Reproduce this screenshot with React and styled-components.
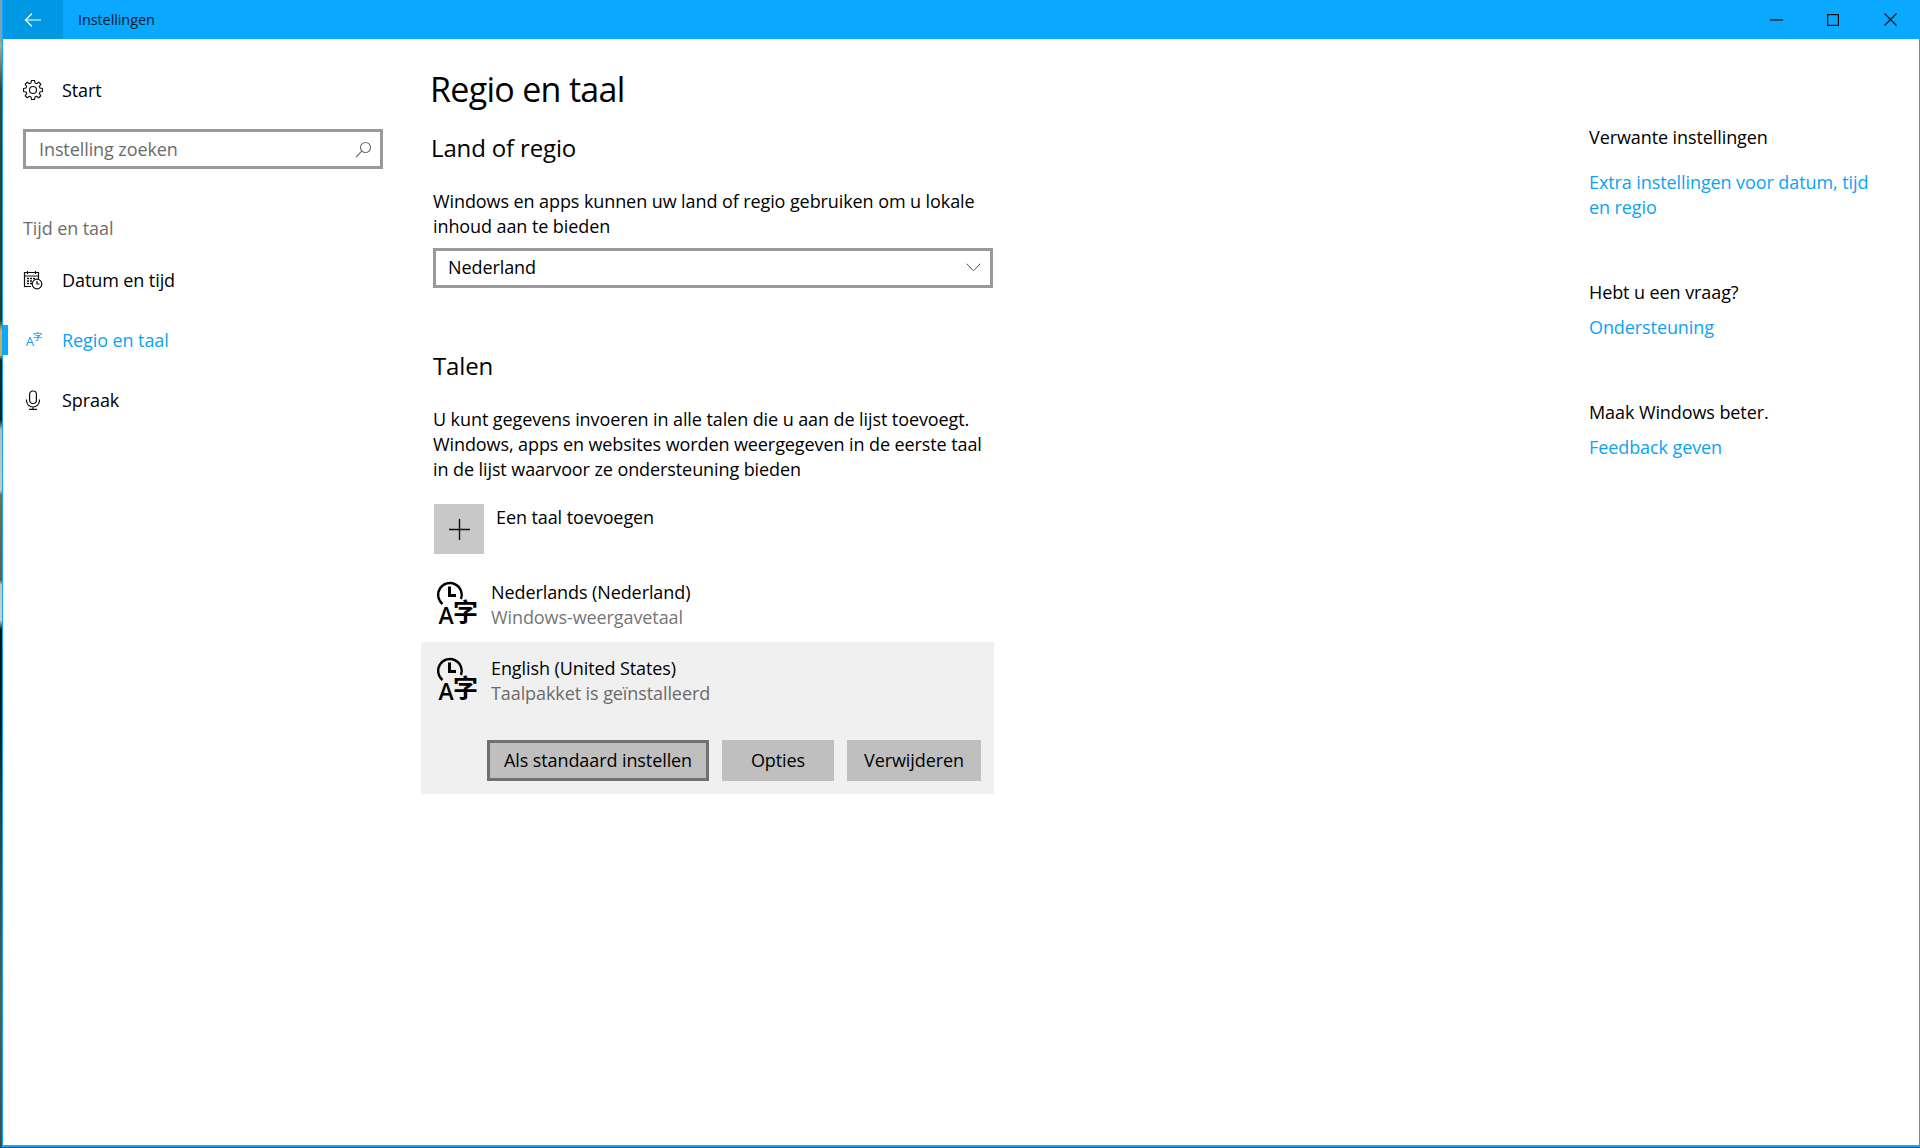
import React from 'react';
import styled, { createGlobalStyle } from 'styled-components';

const FONT = `"Open Sans", "Noto Sans", "Liberation Sans", sans-serif`;
const BLUE = '#0aa8ff';
const LINK = '#0aa3f5';

const Global = createGlobalStyle`
  html, body { margin: 0; padding: 0; height: 100%; }
  body {
    background: linear-gradient(180deg,
      #7ea0b0 0, #7ea0b0 40px, #b5a878 45px, #39413a 90px, #2a3a30 320px,
      #c9ad5c 330px, #c9ad5c 355px, #1f2a28 360px, #15202a 420px,
      #b9bcbc 430px, #c8c8c8 490px, #7d6a42 495px, #6b5c3e 580px,
      #c4c6c4 585px, #cfcfcf 620px, #08121c 630px, #0a1a28 720px,
      #2c3a40 800px, #555c58 1000px, #44494a 1148px);
    font-family: ${FONT};
    overflow: hidden;
  }
  #root { height: 100%; }
`;

const Window = styled.div`
  box-sizing: border-box;
  margin-left: 2px;
  width: 1918px;
  height: 1147px;
  border: 1px solid ${BLUE};
  border-top: 0;
  border-bottom-width: 2px;
  background: #fff;
  display: flex;
  flex-direction: column;
  color: #000;
  font-size: 18px;
  letter-spacing: -0.09px;
  line-height: 25px;
`;

const TitleBar = styled.header`
  flex: none;
  height: 39px;
  background: ${BLUE};
  display: flex;
  align-items: center;
`;
const BackButton = styled.button`
  width: 60px;
  height: 39px;
  border: 0;
  padding: 0;
  background: #0097e5;
  display: flex;
  align-items: center;
  justify-content: center;
`;
const AppName = styled.span`
  margin-left: 15px;
  font-size: 14.5px;
  letter-spacing: -0.1px;
  color: #04202f;
`;
const WindowControls = styled.div`
  margin-left: auto;
  display: flex;
`;
const ControlButton = styled.div`
  width: 57px;
  height: 39px;
  margin-left: ${p => p.$shift || 0}px;
  display: flex;
  align-items: center;
  justify-content: center;
`;

const Body = styled.div`
  flex: 1;
  display: flex;
  min-height: 0;
`;

const Sidebar = styled.nav`
  flex: none;
  width: 418px;
  padding-top: 26px;
  box-sizing: border-box;
`;
const NavRow = styled.div`
  height: 50px;
  display: flex;
  align-items: center;
  position: relative;
  padding-left: 20px;
  color: ${p => (p.$active ? LINK : '#000')};
  ${p => p.$active && `
    &::before {
      content: '';
      position: absolute;
      left: 0;
      top: 10px;
      width: 5px;
      height: 30px;
      background: ${BLUE};
    }
  `}
`;
const NavIcon = styled.span`
  width: 20px;
  height: 24px;
  margin-right: 19px;
  display: flex;
  align-items: center;
  justify-content: center;
`;
const NavItems = styled.div`
  display: flex;
  flex-direction: column;
  gap: 10px;
  margin-top: 14px;
`;
const SearchBox = styled.div`
  box-sizing: border-box;
  margin: 14px 0 0 20px;
  width: 360px;
  height: 40px;
  border: 3px solid #999;
  padding: 0 8px 0 13px;
  display: flex;
  align-items: center;
  justify-content: space-between;
  color: #6b6b6b;
`;
const SectionLabel = styled.div`
  margin: 47px 0 0 20px;
  color: #6e6e6e;
`;

const Main = styled.main`
  flex: none;
  width: 700px;
  padding-top: 26px;
  box-sizing: border-box;
`;
const PageTitle = styled.h1`
  margin: 0 0 0 9px;
  font-size: 34px;
  font-weight: 400;
  line-height: 48px;
  letter-spacing: -0.7px;
`;
const SectionTitle = styled.h2`
  margin: ${p => p.$top}px 0 0 ${p => p.$left}px;
  font-size: 24px;
  font-weight: 400;
  line-height: 32px;
  letter-spacing: -0.15px;
`;
const Paragraph = styled.p`
  margin: ${p => p.$top}px 0 0 12px;
  width: 556px;
`;
const Select = styled.div`
  box-sizing: border-box;
  margin: 9px 0 0 12px;
  width: 560px;
  height: 40px;
  border: 3px solid #999;
  padding: 0 9px 2px 12px;
  display: flex;
  align-items: center;
  justify-content: space-between;
`;
const AddRow = styled.div`
  margin: 22px 0 0 13px;
  display: flex;
  gap: 12px;
  height: 50px;
`;
const AddTile = styled.div`
  width: 50px;
  height: 50px;
  background: #c8c8c8;
  display: flex;
  align-items: center;
  justify-content: center;
`;
const AddLabel = styled.span`
  line-height: 26px;
`;
const LangRow = styled.div`
  display: flex;
  height: 50px;
  padding-left: 15px;
`;
const LangIconWrap = styled.span`
  width: 42px;
  height: 50px;
  margin-right: 13px;
  flex: none;
`;
const LangText = styled.div`
  display: flex;
  flex-direction: column;
`;
const Muted = styled.span`
  color: ${p => (p.$dark ? '#6b6b6b' : '#767676')};
`;
const LangList = styled.div`
  margin-top: 26px;
`;
const LangGap = styled.div`
  height: 12px;
`;
const SelectedPanel = styled.div`
  box-sizing: border-box;
  width: 573px;
  height: 152px;
  background: #f0f0f0;
  padding-top: 14px;
`;
const Actions = styled.div`
  display: flex;
  gap: 13px;
  margin: 34px 0 0 66px;
`;
const ActionButton = styled.button`
  box-sizing: border-box;
  height: 41px;
  width: ${p => p.$w}px;
  padding: 0;
  background: #bfbfbf;
  border: ${p => (p.$focus ? '3px solid #707070' : '0')};
  font: inherit;
  letter-spacing: inherit;
  color: #000;
`;

const Aside = styled.aside`
  flex: none;
  margin-left: 468px;
  width: 300px;
  padding-top: 86px;
  box-sizing: border-box;
`;
const AsideGroup = styled.section`
  margin-bottom: ${p => p.$gap}px;
`;
const AsideTitle = styled.div`
  margin-bottom: ${p => p.$gap}px;
`;
const Link = styled.a`
  display: block;
  color: ${LINK};
`;

const Back = () => (
  <svg width="18" height="16" viewBox="0 0 18 16" fill="none" stroke="#fff" strokeWidth="1.2">
    <path d="M17 8H1.5M8 1.5 1.5 8 8 14.5" />
  </svg>
);
const Gear = () => (
  <svg width="20" height="20" viewBox="0 0 24 24" fill="none" stroke="#111" strokeWidth="1.4" strokeLinejoin="round">
    <path d="M10.2 1h3.6l.6 3.1 1.9.8 2.6-1.8 2.5 2.5-1.8 2.6.8 1.9 3 .6v3.6l-3 .6-.8 1.9 1.8 2.6-2.5 2.5-2.6-1.8-1.9.8-.6 3h-3.6l-.6-3-1.9-.8-2.6 1.8-2.5-2.5 1.8-2.6-.8-1.9-3-.6v-3.6l3-.6.8-1.9-1.8-2.6 2.5-2.5 2.6 1.8 1.9-.8z" transform="translate(0 -.5)" />
    <circle cx="12" cy="12" r="4.2" />
  </svg>
);
const Search = () => (
  <svg width="17" height="17" viewBox="0 0 17 17" fill="none" stroke="#6a6a6a" strokeWidth="1.1">
    <circle cx="10.5" cy="6.5" r="5" />
    <path d="M6.8 10.2 1 16" />
  </svg>
);
const Calendar = () => (
  <svg width="20" height="20" viewBox="0 0 20 20" fill="none" stroke="#111" strokeWidth="1.2">
    <path d="M8 16.5H1.5V2.5h14v6.5M1.5 6h14M4.5 1v3M12.5 1v3" />
    <path d="M4 8.5h2M7 8.5h2M10 8.5h2M4 11h2M7 11h2M4 13.5h2M7 13.5h2" strokeWidth="1.3" />
    <circle cx="14" cy="14" r="4.8" fill="#fff" />
    <path d="M14 11v3h2.5" />
  </svg>
);
const Glyphs = styled.text`
  font-family: ${p => (p.$cjk ? '"Noto Sans CJK SC", sans-serif' : FONT)};
  letter-spacing: 0;
`;
const NavLang = () => (
  <svg width="26" height="30" viewBox="0 0 26 30" fill={LINK}>
    <Glyphs x="3.5" y="23" fontSize="17">A</Glyphs>
    <Glyphs $cjk x="13" y="15" fontSize="12" fontWeight="500">字</Glyphs>
  </svg>
);
const Mic = () => (
  <svg width="16" height="20" viewBox="0 0 16 20" fill="none" stroke="#111" strokeWidth="1.2">
    <rect x="4.6" y="1" width="6.8" height="12.5" rx="3.2" />
    <path d="M1.5 9.5v1a6.5 6.5 0 0 0 13 0v-1M8 17v2.5M4 19.4h8" />
  </svg>
);
const Chevron = () => (
  <svg width="15" height="9" viewBox="0 0 15 9" fill="none" stroke="#555" strokeWidth="1">
    <path d="M.7.7 7.5 7.8 14.3.7" />
  </svg>
);
const Plus = () => (
  <svg width="21" height="21" viewBox="0 0 21 21" stroke="#111" strokeWidth="1.4">
    <path d="M10.5 0v21M0 10.5h21" />
  </svg>
);
const LangIcon = () => (
  <svg width="44" height="52" viewBox="0 0 44 52" fill="#000">
    <path d="M25 19A11.8 11.8 0 1 0 6.5 24" fill="none" stroke="#000" strokeWidth="2.4" />
    <path d="M13.5 6.5v9h6.5" fill="none" stroke="#000" strokeWidth="3" />
    <Glyphs x="2.5" y="44" fontSize="23" fontWeight="600">A</Glyphs>
    <Glyphs $cjk x="17" y="41" fontSize="25" fontWeight="700">字</Glyphs>
  </svg>
);

export default function App() {
  return (
    <>
      <Global />
      <Window>
        <TitleBar>
          <BackButton><Back /></BackButton>
          <AppName>Instellingen</AppName>
          <WindowControls>
            <ControlButton>
              <svg width="13" height="2" viewBox="0 0 13 2"><path d="M0 1h13" stroke="#111" strokeWidth="1.3" /></svg>
            </ControlButton>
            <ControlButton $shift={-1}>
              <svg width="12" height="12" viewBox="0 0 12 12" fill="none"><rect x=".6" y=".6" width="10.8" height="10.8" stroke="#111" strokeWidth="1.2" /></svg>
            </ControlButton>
            <ControlButton $shift={1}>
              <svg width="13" height="13" viewBox="0 0 13 13" fill="none" stroke="#111" strokeWidth="1.1"><path d="M.5.5l12 12M12.5.5l-12 12" /></svg>
            </ControlButton>
          </WindowControls>
        </TitleBar>
        <Body>
          <Sidebar>
            <NavRow><NavIcon><Gear /></NavIcon>Start</NavRow>
            <SearchBox>Instelling zoeken<Search /></SearchBox>
            <SectionLabel>Tijd en taal</SectionLabel>
            <NavItems>
              <NavRow><NavIcon><Calendar /></NavIcon>Datum en tijd</NavRow>
              <NavRow $active><NavIcon><NavLang /></NavIcon>Regio en taal</NavRow>
              <NavRow><NavIcon><Mic /></NavIcon>Spraak</NavRow>
            </NavItems>
          </Sidebar>
          <Main>
            <PageTitle>Regio en taal</PageTitle>
            <SectionTitle $top={19} $left={10}>Land of regio</SectionTitle>
            <Paragraph $top={25}>Windows en apps kunnen uw land of regio gebruiken om u lokale inhoud aan te bieden</Paragraph>
            <Select>Nederland<Chevron /></Select>
            <SectionTitle $top={62} $left={12}>Talen</SectionTitle>
            <Paragraph $top={25}>U kunt gegevens invoeren in alle talen die u aan de lijst toevoegt. Windows, apps en websites worden weergegeven in de eerste taal in de lijst waarvoor ze ondersteuning bieden</Paragraph>
            <AddRow>
              <AddTile><Plus /></AddTile>
              <AddLabel>Een taal toevoegen</AddLabel>
            </AddRow>
            <LangList>
              <LangRow>
                <LangIconWrap><LangIcon /></LangIconWrap>
                <LangText>Nederlands (Nederland)<Muted>Windows-weergavetaal</Muted></LangText>
              </LangRow>
              <LangGap />
              <SelectedPanel>
                <LangRow>
                  <LangIconWrap><LangIcon /></LangIconWrap>
                  <LangText>English (United States)<Muted $dark>Taalpakket is geïnstalleerd</Muted></LangText>
                </LangRow>
                <Actions>
                  <ActionButton $w={222} $focus>Als standaard instellen</ActionButton>
                  <ActionButton $w={112}>Opties</ActionButton>
                  <ActionButton $w={134}>Verwijderen</ActionButton>
                </Actions>
              </SelectedPanel>
            </LangList>
          </Main>
          <Aside>
            <AsideGroup $gap={60}>
              <AsideTitle $gap={20}>Verwante instellingen</AsideTitle>
              <Link>Extra instellingen voor datum, tijd<br />en regio</Link>
            </AsideGroup>
            <AsideGroup $gap={60}>
              <AsideTitle $gap={10}>Hebt u een vraag?</AsideTitle>
              <Link>Ondersteuning</Link>
            </AsideGroup>
            <AsideGroup $gap={0}>
              <AsideTitle $gap={10}>Maak Windows beter.</AsideTitle>
              <Link>Feedback geven</Link>
            </AsideGroup>
          </Aside>
        </Body>
      </Window>
    </>
  );
}
